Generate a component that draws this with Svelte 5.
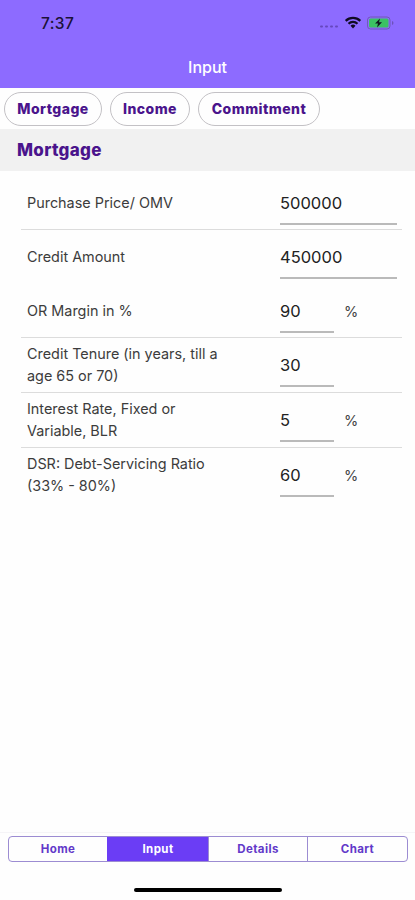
<script>
    const sections = [
        { name: "Mortgage", width: 98 },
        { name: "Income", width: 80 },
        { name: "Commitment", width: 122 },
    ];
    const tabs = ["Home", "Input", "Details", "Chart"];

    const rows = [
        { lines: ["Purchase Price/ OMV"], value: "500000", wide: true, divider: true },
        { lines: ["Credit Amount"], value: "450000", wide: true },
        { lines: ["OR Margin in %"], value: "90", unit: "%", divider: true },
        { lines: ["Credit Tenure (in years, till a", "age 65 or 70)"], value: "30", divider: true },
        { lines: ["Interest Rate, Fixed or", "Variable, BLR"], value: "5", unit: "%", divider: true },
        { lines: ["DSR: Debt-Servicing Ratio", "(33% - 80%)"], value: "60", unit: "%" },
    ];

    let active = $state("Input");
</script>

<div class="screen">
    <header>
        <div class="status">
            <span class="time">7:37</span>
            <svg width="76" height="16" viewBox="0 0 76 16">
                <g fill="#6547bd">
                    <rect x="1" y="10.5" width="3" height="2" rx="1" />
                    <rect x="6" y="10.5" width="3" height="2" rx="1" />
                    <rect x="11" y="10.5" width="3" height="2" rx="1" />
                    <rect x="16" y="10.5" width="3" height="2" rx="1" />
                </g>
                <g fill="none" stroke="#100b22" stroke-width="2.2">
                    <path d="M26.7 5.9a10.4 10.4 0 0 1 14.6 0" />
                    <path d="M29.5 8.8a6.4 6.4 0 0 1 9 0" />
                </g>
                <path d="M31.5 10.8a3.6 3.6 0 0 1 5 0l-2.5 2.6z" fill="#100b22" />
                <rect x="48.5" y="2" width="22.5" height="12" rx="3" fill="none" stroke="#7159b8" />
                <rect x="50" y="3.5" width="19.5" height="9" rx="1.5" fill="#3bc263" />
                <path d="M73 6v4q1.5-.6 1.5-2t-1.5-2z" fill="#6d51bb" />
                <path d="M61 3.5l-5 5h3l-1 4 5-5.2h-3z" fill="#101721" />
            </svg>
        </div>
        <h1>Input</h1>
    </header>

    <nav class="sections">
        {#each sections as section}
            <button style="width: {section.width}px">{section.name}</button>
        {/each}
    </nav>

    <h2>Mortgage</h2>

    <main>
        {#each rows as row}
            <div class="row" class:tall={row.lines.length > 1} class:divider={row.divider}>
                <div class="label">
                    {#each row.lines as line}
                        <div>{line}</div>
                    {/each}
                </div>
                <div class="value" class:wide={row.wide}>{row.value}</div>
                {#if row.unit}
                    <span class="unit">{row.unit}</span>
                {/if}
            </div>
        {/each}
    </main>

    <footer>
        <div class="tabs">
            {#each tabs as tab}
                <button class:active={tab === active} onclick={() => (active = tab)}>{tab}</button>
            {/each}
        </div>
        <div class="home"></div>
    </footer>
</div>

<style>
    :global(body) {
        margin: 0;
    }

    .screen {
        display: flex;
        flex-direction: column;
        width: 415px;
        height: 900px;
        overflow: hidden;
        background: #fefefe;
        font-family: Inter, "Liberation Sans", sans-serif;
    }

    button {
        box-sizing: border-box;
        padding: 0;
        font: inherit;
        background: none;
        white-space: nowrap;
    }

    header {
        height: 88px;
        background: #8d6bff;
    }

    .status {
        display: flex;
        justify-content: space-between;
        align-items: center;
        height: 30px;
        padding: 8px 20px 8px 41px;
    }

    .time {
        font-size: 15.5px;
        font-weight: 500;
        letter-spacing: 0.4px;
        color: #1b1236;
    }

    h1 {
        margin: 10px 0 0;
        font-size: 16px;
        line-height: 22px;
        font-weight: 500;
        text-align: center;
        color: #fff;
    }

    .sections {
        display: flex;
        gap: 8px;
        padding: 4px 4px 3px;
    }

    .sections button {
        height: 34px;
        padding-bottom: 1px;
        border: 1px solid #c3c1c5;
        border-radius: 17px;
        font-size: 14px;
        font-weight: 800;
        letter-spacing: 0.45px;
        color: #4a148c;
    }

    h2 {
        height: 42px;
        margin: 0;
        padding-left: 17px;
        background: #f1f1f1;
        font-size: 17px;
        line-height: 43px;
        font-weight: 800;
        letter-spacing: 0.3px;
        color: #4a148c;
    }

    main {
        flex: 1;
        padding: 5px 13px 0 21px;
    }

    .row {
        display: flex;
        box-sizing: border-box;
        height: 54px;
        padding-left: 6px;
    }

    .row.tall {
        height: 55px;
    }

    .row.divider {
        border-bottom: 1px solid #dcdcdc;
    }

    .label {
        display: flex;
        flex-direction: column;
        justify-content: center;
        width: 253px;
        font-size: 14.4px;
        line-height: 22px;
        color: #3c3c3c;
        white-space: nowrap;
    }

    .row.tall .label {
        height: 54px;
    }

    .value {
        box-sizing: border-box;
        width: 54px;
        height: 49px;
        padding-top: 5px;
        border-bottom: 2px solid #bababa;
        font-size: 16.5px;
        line-height: 44px;
        color: #222;
    }

    .value.wide {
        width: 117px;
    }

    .unit {
        margin-left: 10px;
        font-size: 14.5px;
        line-height: 55px;
        color: #444;
    }

    footer {
        box-sizing: border-box;
        height: 68px;
        padding: 3px 7px 0 8px;
        border-top: 1px solid #f5f4f7;
    }

    .tabs {
        display: grid;
        grid-template-columns: 98px 101px 99px 1fr;
        box-sizing: border-box;
        height: 26px;
        border: 1px solid #9c8cd2;
        border-radius: 4px;
        overflow: hidden;
    }

    .tabs button {
        border: none;
        border-left: 1px solid #9c8cd2;
        font-size: 11.5px;
        font-weight: 700;
        letter-spacing: 0.4px;
        color: #6239c9;
    }

    .tabs button:first-child {
        border-left: none;
    }

    .tabs button.active {
        border-color: #6b3df5;
        background: #6b3df5;
        color: #fff;
    }

    .home {
        width: 148px;
        height: 4px;
        margin: 26px auto 0;
        border-radius: 2px;
        background: #000;
    }
</style>
